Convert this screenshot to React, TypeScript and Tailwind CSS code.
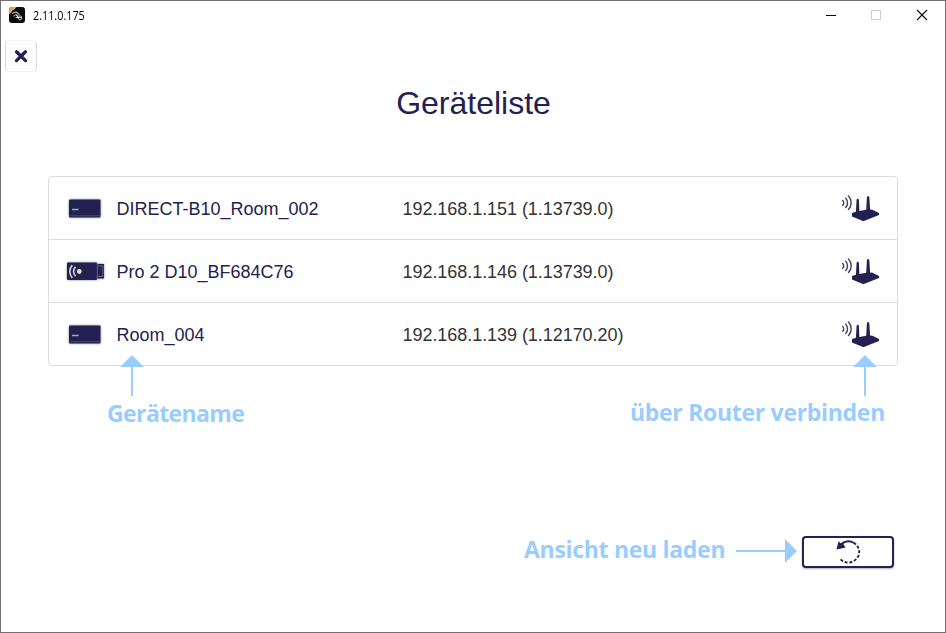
import React from "react";

type Device = { name: string; address: string; kind: "box" | "stick" };

const devices: Device[] = [
  { name: "DIRECT-B10_Room_002", address: "192.168.1.151 (1.13739.0)", kind: "box" },
  { name: "Pro 2 D10_BF684C76", address: "192.168.1.146 (1.13739.0)", kind: "stick" },
  { name: "Room_004", address: "192.168.1.139 (1.12170.20)", kind: "box" },
];

function AppIcon() {
  return (
    <svg width="16" height="16" viewBox="0 0 16 16" className="block">
      <rect width="16" height="16" rx="3" fill="#080706" />
      <path d="M0 7V3a3 3 0 0 1 3-3h4.500L5.500 2.500 3.500 3.500 2 6z" fill="#d9a663" />
      <g fill="none" stroke="#fff" strokeLinecap="round">
        <path d="M3.500 6.500c2-2 4.500-2 6.500 1M5 9c1-1.500 2.500-1.800 4-.3" stroke="#bbb" strokeWidth="1.100" />
        <path d="M7.500 8.500 9.200 10.500M7 10.500h2.500M12.700 9.700c-1.500-1.800-4-.4-3.500 1.600.5 2 3.300 2 3.700.1M10.500 10.600h2" strokeWidth=".9" />
      </g>
    </svg>
  );
}

function BoxIcon() {
  return (
    <svg width="40" height="26" viewBox="0 0 40 26" className="block drop-shadow-[0_0.5px_1px_rgba(0,0,0,0.5)]">
      <rect x="4" y="4.500" width="31.500" height="18" rx="1" fill="#232150" />
      <path d="M4.500 20.800h30.500" stroke="#56546f" strokeWidth=".8" />
      <path d="M7 14.500h6.500" stroke="#a9a8b5" strokeWidth="1.500" />
    </svg>
  );
}

function StickIcon() {
  return (
    <svg width="40" height="26" viewBox="0 0 40 26" className="block drop-shadow-[0_0.5px_1px_rgba(0,0,0,0.5)]">
      <rect x="2" y="4.500" width="30" height="17.500" rx="1" fill="#232150" />
      <path d="M31 6h8v14.500h-8z" fill="#232150" />
      <path d="M32.300 5.500v15.500M33 8h4.500M33 18.500h4.500M37.800 7.500v11.500" stroke="#77758d" strokeWidth=".8" />
      <circle cx="14.300" cy="13.500" r="2.400" fill="#deded9" />
      <path d="M10.500 8.800c-2.500 2.700-2.500 6.700 0 9.400M7.300 7.200c-3.300 3.500-3.300 9.100 0 12.600" fill="none" stroke="#c9c8c5" strokeWidth="1.700" />
    </svg>
  );
}

function RouterIcon() {
  return (
    <svg width="40" height="28" viewBox="0 0 40 28" className="block">
      <g fill="none" stroke="#42405f" strokeWidth="1.400" strokeLinecap="round">
        <path d="M2.700 7.500c1.300 1.200 1.300 3.600 0 4.800M5.700 5.300c2.400 2.500 2.400 6.700 0 9.200M8.500 3c3.600 3.700 3.600 9.800 0 13.500" />
      </g>
      <path d="m12 20 3.900-1.300.7-12 .7-1h.8l.8 1 .5 11.300 6.800-1.300.7-12.400.8-1.200h.8l.8 1.200.8 12.200 2.400.2 6.500 3.200V22l-15.600 6.200L12 23.600z" fill="#232150" />
    </svg>
  );
}

function UpArrow() {
  return (
    <svg width="24" height="41" viewBox="0 0 24 41" className="block">
      <path d="M12 0 24 12H13V41H11V12H0z" fill="#99ccff" />
    </svg>
  );
}

function ReloadIcon() {
  return (
    <svg width="28" height="26" viewBox="0 0 28 26" className="block">
      <path d="M7 5.500C10.500 1.800 15.500 1.500 19.500 3.700" fill="none" stroke="#232150" strokeWidth="2" />
      <path d="M19.500 3.700C25.500 7 27 14 23 19.300 18.500 24.500 11.500 25 6.500 20.300" fill="none" stroke="#232150" strokeWidth="1.900" strokeDasharray="3 1.800" />
      <path d="m4.600 2.300 2.300 2.200 2-.8 1.100 2.500 1.600 2.300-9.200 2z" fill="#232150" />
    </svg>
  );
}

export default function App() {
  return (
    <main className="flex h-[633px] w-[946px] flex-col overflow-hidden border border-[#707070] bg-white font-['Liberation_Sans',sans-serif] text-[#232150]">
      <header className="flex h-[30px] shrink-0 items-start justify-between pt-[6px] pl-2 text-black">
        <div className="flex h-4 items-center gap-2">
          <AppIcon />
          <span className="mt-[2px] origin-left scale-x-[0.9] font-['Open_Sans',sans-serif] text-[12px] leading-4">2.11.0.175</span>
        </div>
        <svg width="128" height="18" viewBox="0 0 128 18" className="block" fill="none">
          <path d="M9 8.500h10" stroke="#000" />
          <rect x="54.500" y="3.500" width="9" height="9" stroke="#ccc" />
          <path d="m100 3 10 10m0-10-10 10" stroke="#000" strokeWidth="1.100" />
        </svg>
      </header>
      <button aria-label="Schließen" className="mt-[9px] ml-1 flex h-8 w-8 shrink-0 items-center justify-center rounded border border-[#dddddd] border-t-[#f8f8f8] border-b-[#f5f5f5] bg-[#fdfdfd]">
        <svg width="14" height="14" viewBox="0 0 14 14">
          <path d="m2.500 2.800 9 8.800m0-8.800-9 8.800" stroke="#232150" strokeWidth="3.300" strokeLinecap="round" />
        </svg>
      </button>
      <h1 className="mt-[11px] h-10 shrink-0 pl-px text-center text-[32px] leading-10">Geräteliste</h1>
      <ul className="mt-[53px] ml-[47px] w-[850px] shrink-0 rounded border border-[#dddddd]">
        {devices.map((device, index) => (
          <li key={device.name} className={`flex items-center text-[18px] ${index === 2 ? "h-[62px]" : "h-[63px] border-b border-[#dddddd]"}`}>
            <div className="ml-4 w-[51.5px]">{device.kind === "box" ? <BoxIcon /> : <StickIcon />}</div>
            <span className="mt-0.5 w-[286px]">{device.name}</span>
            <span className="mt-0.5 flex-1 tracking-[-0.05px] text-[#333333]">{device.address}</span>
            <div className="mr-[17px] mb-[2px]"><RouterIcon /></div>
          </li>
        ))}
      </ul>
      <div className="relative -mt-[11px] mr-[47px] ml-[106px] flex h-20 shrink-0 justify-between font-['Open_Sans',sans-serif] text-[23px] leading-8 font-bold text-[#99ccff]">
        <div>
          <div className="ml-[13px]"><UpArrow /></div>
          <div className="mt-[1px] tracking-[-0.6px] whitespace-nowrap">Gerätename</div>
        </div>
        <div className="w-[268px]">
          <div className="ml-[223px]"><UpArrow /></div>
          <div className="tracking-[-0.3px] whitespace-nowrap">über Router verbinden</div>
        </div>
      </div>
      <div className="mt-[100px] mr-[51px] flex h-[34px] shrink-0 items-center justify-end">
        <span className="mb-[6px] w-[201px] tracking-[-0.3px] whitespace-nowrap font-['Open_Sans',sans-serif] text-[23px] leading-8 font-bold text-[#99ccff]">Ansicht neu laden</span>
        <svg width="62" height="26" viewBox="0 0 62 26" className="mr-[4px] ml-[11px] block">
          <path d="M0 11h49V0l12 12-12 12V13H0z" fill="#99ccff" />
        </svg>
        <button aria-label="Ansicht neu laden" className="flex h-8 w-[92px] items-center justify-center rounded-[4px] border-2 border-[#232150] bg-white shadow-[0_1px_2px_rgba(35,33,80,0.35)]">
          <ReloadIcon />
        </button>
      </div>
    </main>
  );
}
